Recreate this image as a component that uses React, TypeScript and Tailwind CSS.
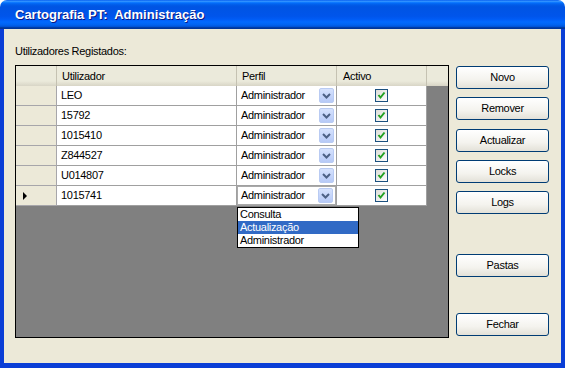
import React from "react";

const USERS = ["LEO", "15792", "1015410", "Z844527", "U014807", "1015741"];
const PROFILES = ["Consulta", "Actualização", "Administrador"];

const TITLE_BG =
  "bg-[linear-gradient(to_bottom,#0058EE_0%,#3593FF_4%,#288EFF_6%,#127DFF_8%,#036FFC_10%,#0262EE_14%,#0057E5_20%,#0054E3_24%,#0055EB_56%,#005BF5_66%,#026AFE_76%,#0062EF_86%,#0052D6_92%,#0040AB_94%,#003092_100%)]";

function ComboArrow() {
  return (
    <div className="flex h-[15px] w-[15px] items-center justify-center rounded-[2px] border border-[#B9CBF3] bg-[linear-gradient(to_bottom,#D6E2FD,#B7CAF7)]">
      <svg width="9" height="6" viewBox="0 0 9 6">
        <path d="M1 1 L4.5 4.5 L8 1" fill="none" stroke="#4D6185" strokeWidth="2" />
      </svg>
    </div>
  );
}

function CheckBox() {
  return (
    <div className="flex h-[13px] w-[13px] items-center justify-center border border-[#1C5180] bg-[linear-gradient(135deg,#DCDCD7,#FFFFFF)]">
      <svg width="9" height="9" viewBox="0 0 9 9">
        <path d="M1.5 4 L3.5 6.5 L7.5 1.5" fill="none" stroke="#21A121" strokeWidth="2" />
      </svg>
    </div>
  );
}

function XpButton({ label, className = "" }: { label: string; className?: string }) {
  return (
    <button
      className={
        "flex h-[23px] w-[93px] items-center justify-center rounded-[3px] border border-[#003C74] bg-[linear-gradient(to_bottom,#FFFFFF_0%,#F4F3EE_60%,#E3E1D8_100%)] text-[11px] tracking-[-0.3px] text-black " +
        className
      }
    >
      {label}
    </button>
  );
}

function GridRow({ user, current }: { user: string; current: boolean }) {
  return (
    <div className="flex h-[20px]">
      <div className="flex w-[41px] items-center border-r border-b border-[#A7A6AA] bg-[#ECE9D8] pl-[7px]">
        {current && (
          <svg width="4" height="8" viewBox="0 0 4 8">
            <path d="M0 0 L4 4 L0 8 Z" fill="#000" />
          </svg>
        )}
      </div>
      <div className="flex w-[180px] items-center border-r border-b border-[#A0A0A0] bg-white pl-[4px]">
        {user}
      </div>
      <div className="w-[100px] border-r border-b border-[#A0A0A0] bg-white">
        <div
          className={
            "flex h-full items-center justify-between pr-[2px] " +
            (current ? "border border-[#A9A9A9] pl-[3px]" : "pl-[4px]")
          }
        >
          <span>Administrador</span>
          <ComboArrow />
        </div>
      </div>
      <div className="flex w-[90px] items-center justify-center border-r border-b border-[#A0A0A0] bg-white">
        <CheckBox />
      </div>
    </div>
  );
}

function UsersGrid() {
  return (
    <div className="relative h-[273px] w-[434px] border border-black bg-[#808080]">
      <div className="flex h-[20px] bg-[linear-gradient(to_bottom,#EBEADB_0%,#EBEADB_75%,#D8D5C6_100%)]">
        <div className="w-[41px] border-r border-[#C5C2B2]" />
        <div className="flex w-[180px] items-center border-r border-[#C5C2B2] pl-[5px]">Utilizador</div>
        <div className="flex w-[100px] items-center border-r border-[#C5C2B2] pl-[5px]">Perfil</div>
        <div className="flex w-[90px] items-center border-r border-[#C5C2B2] pl-[6px]">Activo</div>
      </div>
      {USERS.map((u, i) => (
        <GridRow key={u} user={u} current={i === USERS.length - 1} />
      ))}

      {/* open combo list over the grid */}
      <div className="absolute left-[221px] top-[141px] w-[122px] border border-black bg-white">
        {PROFILES.map((p) => (
          <div
            key={p}
            className={
              "flex h-[13px] items-center pl-[2px] " +
              (p === "Actualização" ? "bg-[#316AC5] text-white" : "text-black")
            }
          >
            {p}
          </div>
        ))}
      </div>
    </div>
  );
}

export default function App() {
  return (
    <div className="flex h-[368px] w-[565px] flex-col bg-white font-['Liberation_Sans',Arial,sans-serif] text-[11px] tracking-[-0.3px] text-black">
      <div className={"flex h-[29px] shrink-0 items-center rounded-t-[7px] pl-[15px] " + TITLE_BG}>
        <span className="whitespace-pre text-[13px] font-bold tracking-normal text-white [text-shadow:1px_1px_0_#0A1883]">
          Cartografia PT:  Administração
        </span>
      </div>
      <div className="flex flex-1 flex-col border-x-4 border-b-[5px] border-[#0A3ED6] bg-[#ECE9D8] pl-[11px] pt-[16px]">
        <div className="h-[13px] leading-[13px]">Utilizadores Registados:</div>
        <div className="mt-[7px] flex">
          <UsersGrid />
          <div className="ml-[7px] flex flex-col pt-px">
            <XpButton label="Novo" />
            <XpButton label="Remover" className="mt-[8px]" />
            <XpButton label="Actualizar" className="mt-[9px]" />
            <XpButton label="Locks" className="mt-[8px]" />
            <XpButton label="Logs" className="mt-[8px]" />
            <XpButton label="Pastas" className="mt-[40px]" />
            <XpButton label="Fechar" className="mt-[36px]" />
          </div>
        </div>
      </div>
    </div>
  );
}
